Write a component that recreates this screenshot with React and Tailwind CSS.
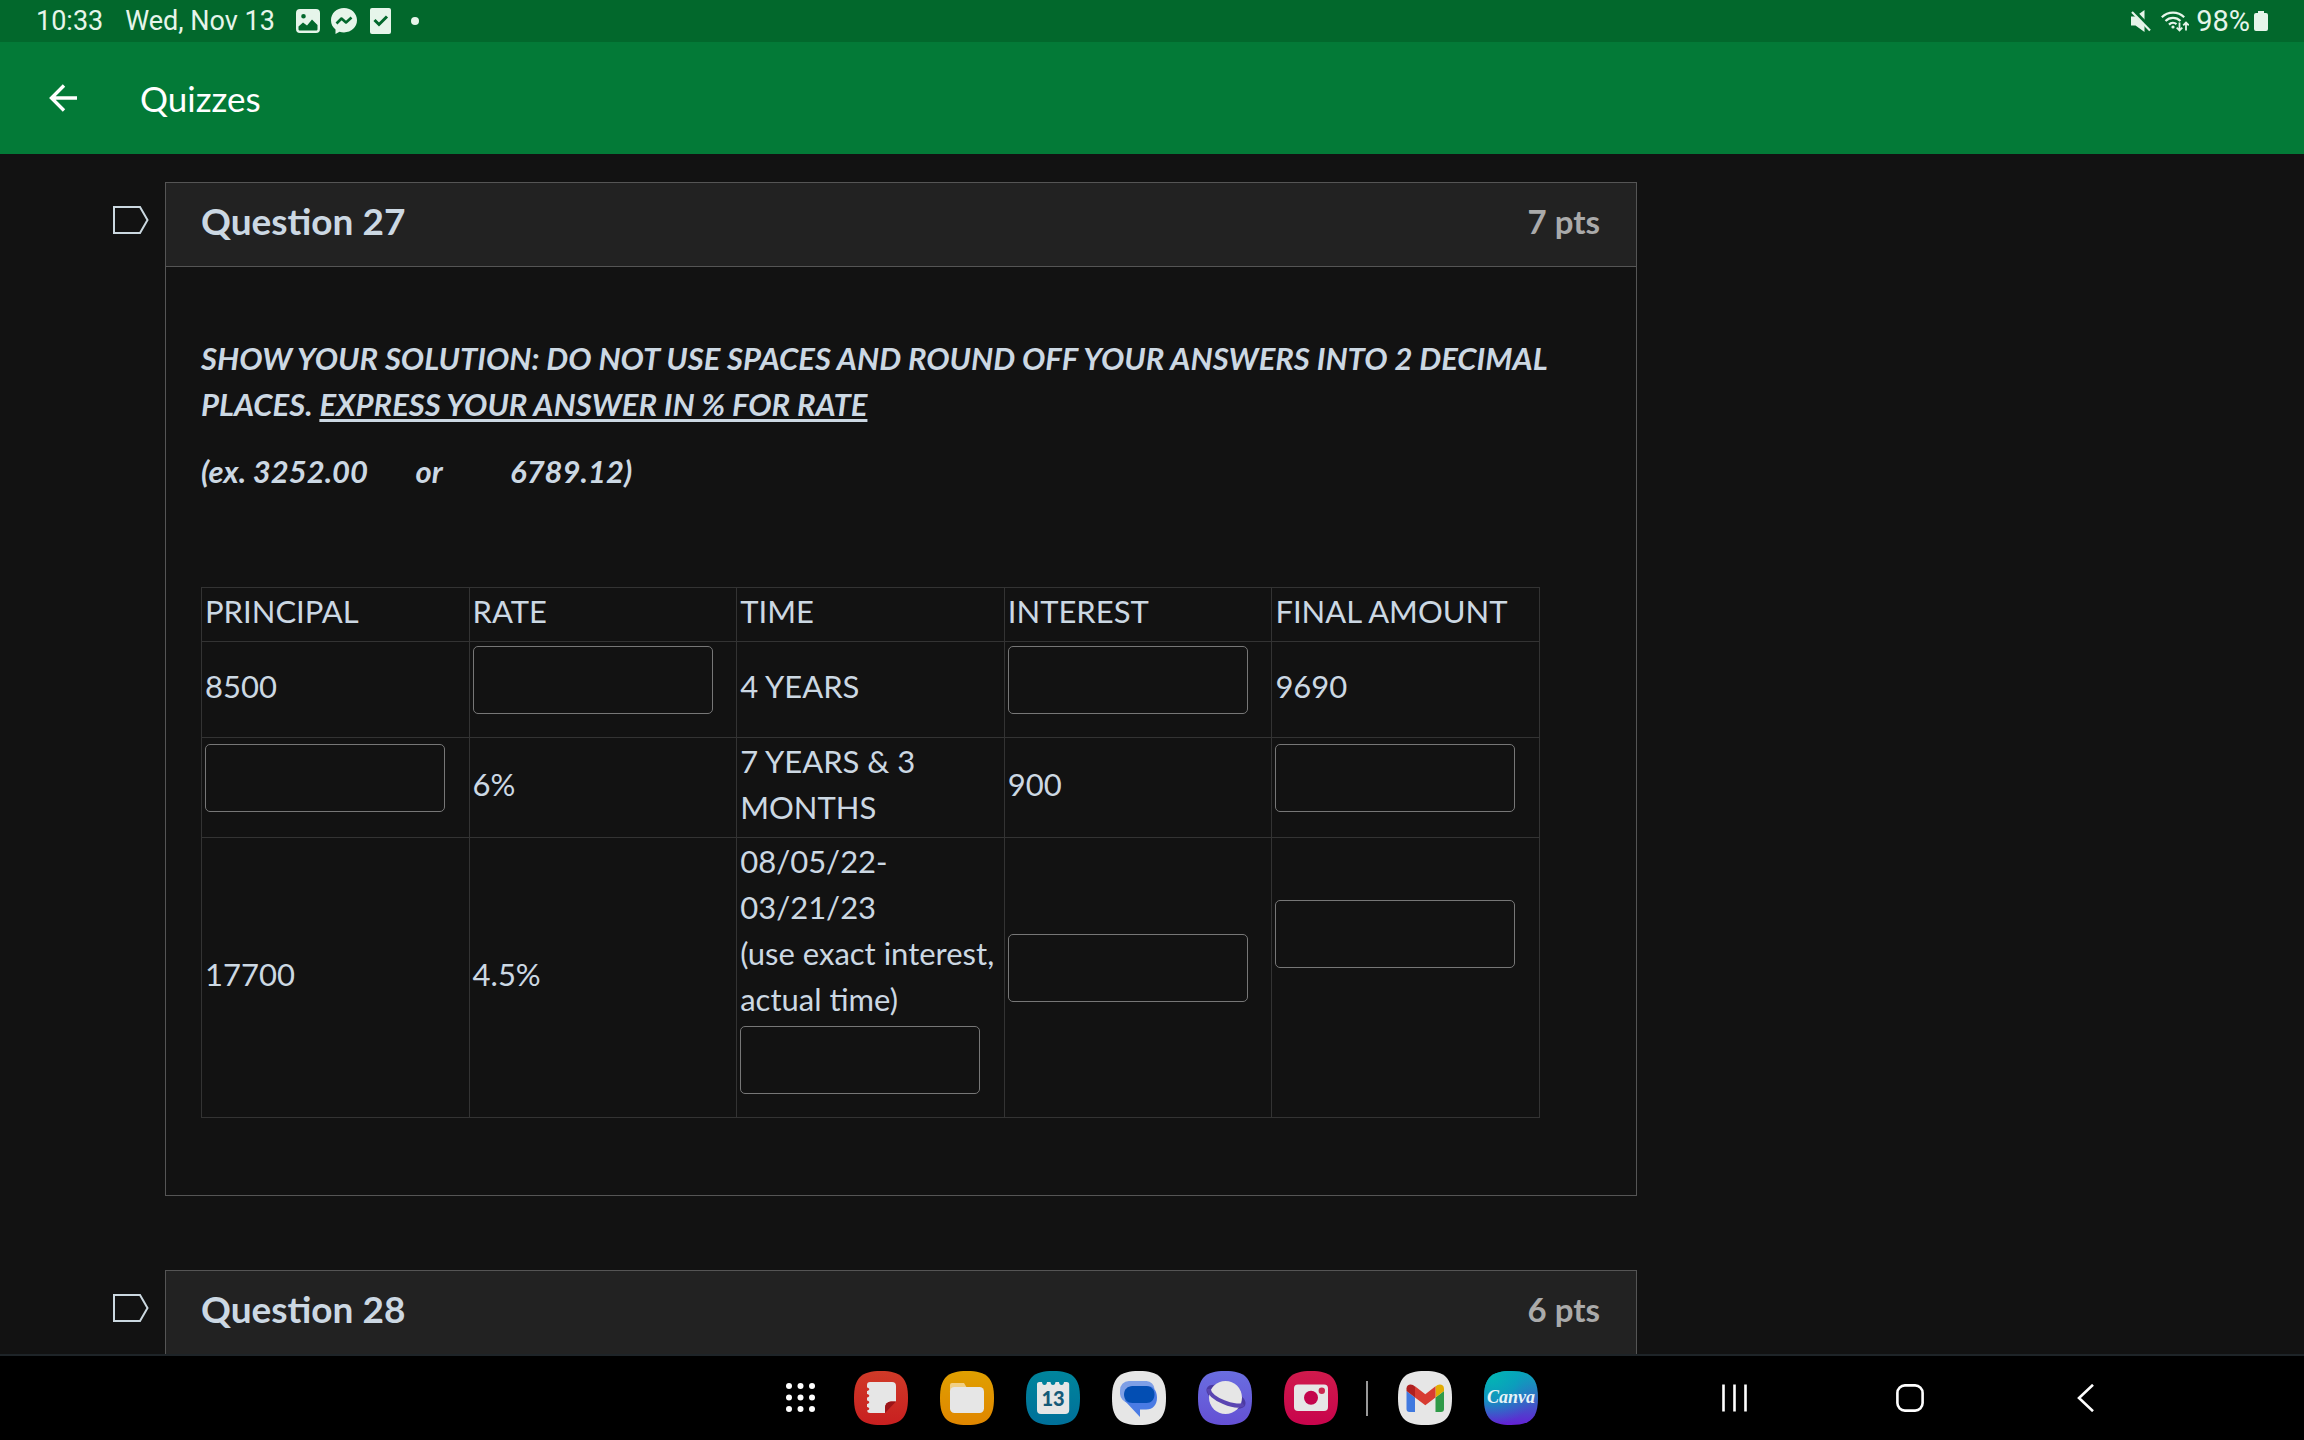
import { useState } from 'react';

const SQUIRCLE = 'M27 0C47 0 54 7 54 27S47 54 27 54 0 47 0 27 7 0 27 0Z';

const QUESTION_ROWS = [
  [{ text: '8500' }, { input: 'rate1' }, { text: '4 YEARS' }, { input: 'interest1' }, { text: '9690' }],
  [{ input: 'principal2' }, { text: '6%' }, { text: '7 YEARS & 3 MONTHS' }, { text: '900' }, { input: 'final2' }],
  [
    { text: '17700' },
    { text: '4.5%' },
    { lines: ['08/05/22-', '03/21/23', '(use exact interest,', 'actual time)'], input: 'time3' },
    { input: 'interest3' },
    { input: 'final3', trailing: true },
  ],
];

const COLUMNS = ['PRINCIPAL', 'RATE', 'TIME', 'INTEREST', 'FINAL AMOUNT'];

function StatusBar() {
  return (
    <div className="flex h-[42px] shrink-0 items-center justify-between bg-[#02682c] pl-9 pr-9 font-['Roboto',sans-serif] text-[27px] leading-[42px] text-[#e6f5ea]">
      <div className="flex items-center">
        <span>10:33</span>
        <span className="ml-[22px]">Wed, Nov 13</span>
        <svg className="ml-[21px]" width="24" height="24" viewBox="0 0 24 24">
          <path fillRule="evenodd" fill="currentColor" d="M4 0h16a4 4 0 0 1 4 4v16a4 4 0 0 1-4 4H4a4 4 0 0 1-4-4V4a4 4 0 0 1 4-4ZM2.500 17.500V20c0 1 .5 1.500 1.500 1.500h16c1 0 1.500-.5 1.500-1.500v-4L16 10.500l-5 6-4-3ZM7.500 5a2.300 2.300 0 1 0 0 4.600 2.300 2.300 0 0 0 0-4.600Z" />
        </svg>
        <svg className="ml-[11px]" width="26" height="26" viewBox="0 0 26 26">
          <path fill="currentColor" d="M13 0C5.600 0 0 5.400 0 12.300c0 3.800 1.600 7 4.500 9.200V26l4-2.200c1.400.4 2.900.6 4.500.6 7.400 0 13-5.300 13-12.100S20.400 0 13 0Z" />
          <path fill="none" stroke="#02682c" strokeWidth="2.600" strokeLinejoin="round" d="m5.500 15.500 5-5 4.500 4 5.500-5" />
        </svg>
        <svg className="ml-[13px]" width="21" height="26" viewBox="0 0 21 26">
          <rect width="21" height="26" rx="2" fill="currentColor" />
          <path fill="none" stroke="#02682c" strokeWidth="3" d="m4.500 12 4.500 4.500 8-8" />
        </svg>
        <span className="ml-5 size-2 rounded-full bg-[#e6f5ea]" />
      </div>
      <div className="flex items-center">
        <svg width="21" height="22" viewBox="0 0 21 22">
          <path fill="currentColor" d="M0 6.500h4.500L13.500 0v22l-9-6.500H0Z" />
          <path stroke="#02682c" strokeWidth="4.500" d="m2.500 1 18 19" />
          <path stroke="currentColor" strokeWidth="2.200" d="m1 2 18 18.500" />
        </svg>
        <svg className="ml-[9px]" width="28" height="22" viewBox="0 0 28 22" fill="none" stroke="currentColor" strokeWidth="2.200">
          <path d="M.8 7.200a16 16 0 0 1 22.400 0M4.500 11a10.800 10.800 0 0 1 15 0M8 14.600a5.600 5.600 0 0 1 7.500-.4" />
          <circle cx="12" cy="17" r="1.600" fill="currentColor" stroke="none" />
          <path strokeWidth="1.800" d="M18.500 12.500v8m-2.800-2.800 2.800 2.800 2.800-2.800M25 20.500v-8m-2.800 2.800 2.800-2.800 2.800 2.800" />
        </svg>
        <span className="ml-[7px] text-[29px]">98%</span>
        <svg className="ml-1" width="14" height="20" viewBox="0 0 14 20">
          <path fill="currentColor" d="M4 0h6v2h2a2 2 0 0 1 2 2v14a2 2 0 0 1-2 2H2a2 2 0 0 1-2-2V4a2 2 0 0 1 2-2h2Z" />
        </svg>
      </div>
    </div>
  );
}

function AppBar() {
  return (
    <header className="flex h-28 shrink-0 items-center bg-[#037a37] pl-12 text-white">
      <button type="button" aria-label="Back" className="cursor-pointer">
        <svg width="30" height="28" viewBox="0 0 30 28" fill="none" stroke="currentColor" strokeWidth="3.400">
          <path d="M29 14H3.500M16 1.500 3.500 14 16 26.500" />
        </svg>
      </button>
      <h1 className="ml-[62px] text-[35px] leading-[46px]">Quizzes</h1>
    </header>
  );
}

function Question({ title, points, children }) {
  return (
    <section className="flex max-w-[1524px] items-start">
      <button type="button" aria-label={`Flag ${title}`} className="mt-6 w-[52px] shrink-0 cursor-pointer">
        <svg width="36" height="28" viewBox="0 0 36 28" fill="none" stroke="#cbd8e0" strokeWidth="2">
          <path d="M1 1h26l7.500 13L27 27H1Z" />
        </svg>
      </button>
      <div className="min-w-0 flex-1 border border-[#555]">
        <div className="flex justify-between border-b border-[#555] bg-[#222] pt-[15px] pr-9 pb-[22px] pl-[35px] font-bold">
          <h2 className="text-[37px] leading-[46px] text-[#ccd8e3]">{title}</h2>
          <span className="text-[33px] text-[#aaa]">{points}</span>
        </div>
        {children}
      </div>
    </section>
  );
}

function Cell({ cell, answers, onChange }) {
  return (
    <td className="border border-[#333] px-[3px] pb-[7px] align-middle">
      {cell.text}
      {cell.lines && cell.lines.map(line => <div key={line} className="whitespace-nowrap">{line}</div>)}
      {cell.input && (
        <input type="text" aria-label={cell.input} value={answers[cell.input] || ''}
          onChange={e => onChange(cell.input, e.target.value)}
          className={`mt-1 block h-[68px] w-60 max-w-full rounded-[5px] border border-[#777] bg-transparent px-4 outline-none focus:border-[#ccd8e3] ${cell.trailing ? 'mb-[84px]' : 'mb-4'}`} />
      )}
    </td>
  );
}

function AnswerTable() {
  const [answers, setAnswers] = useState({});
  const handleChange = (name, value) => setAnswers(prev => ({ ...prev, [name]: value }));

  return (
    <table className="w-full table-fixed border-collapse text-left">
      <thead>
        <tr>
          {COLUMNS.map(col => (
            <th key={col} scope="col" className="border border-[#333] px-[3px] pb-[7px] font-normal">{col}</th>
          ))}
        </tr>
      </thead>
      <tbody>
        {QUESTION_ROWS.map((row, i) => (
          <tr key={i}>
            {row.map((cell, j) => <Cell key={j} cell={cell} answers={answers} onChange={handleChange} />)}
          </tr>
        ))}
      </tbody>
    </table>
  );
}

function AppIcon({ label, from, to, children }) {
  const id = `bg-${label.toLowerCase()}`;
  return (
    <button type="button" aria-label={label} className="cursor-pointer">
      <svg width="54" height="54" viewBox="0 0 54 54">
        <defs>
          <linearGradient id={id} x1="0" y1="0" x2="0" y2="1">
            <stop offset="0" stopColor={from} />
            <stop offset="1" stopColor={to} />
          </linearGradient>
        </defs>
        <path d={SQUIRCLE} fill={`url(#${id})`} />
        {children}
      </svg>
    </button>
  );
}

function Taskbar() {
  return (
    <nav className="grid h-[86px] shrink-0 grid-cols-[786fr_752px_766fr] items-center border-t-2 border-[#1e2428] bg-black text-white">
      <div className="col-start-2 flex items-center">
        <button type="button" aria-label="All apps" className="mr-[38px] cursor-pointer">
          <svg width="30" height="30" viewBox="0 0 30 30" fill="currentColor">
            {[3, 14.5, 26].map(y => [3, 14.5, 26].map(x => <circle key={`${x}-${y}`} cx={x} cy={y} r="3" />))}
          </svg>
        </button>
        <div className="flex gap-8">
          <AppIcon label="Notes" from="#d03a28" to="#c81f20">
            <path fill="#e6e6e6" d="M16 11h22a4 4 0 0 1 4 4v15.500H37a6 6 0 0 0-6 6V42H16a3 3 0 0 1-3-2.500c3-.3 3-3.200 0-3.500v-3c3-.3 3-3.200 0-3.500v-3c3-.3 3-3.200 0-3.500v-3c3-.3 3-3.200 0-3.500V14a3 3 0 0 1 3-3Z" />
            <path fill="#9c1418" d="M31 42v-5.500a6 6 0 0 1 6-6h5Z" />
          </AppIcon>
          <AppIcon label="Files" from="#e0a000" to="#e08600">
            <path fill="#f0cf85" d="M10 22v-8a2 2 0 0 1 2-2h12l3 5v5Z" />
            <rect x="10" y="16" width="34" height="26" rx="4.500" fill="#e6e6e6" />
          </AppIcon>
          <AppIcon label="Calendar" from="#00859c" to="#00709a">
            <path fill="#e6e6e6" d="M13.500 11H16c.3 2 .8 3 2.500 3s2.200-1 2.500-3h3.500c.3 2 .8 3 2.500 3s2.200-1 2.500-3H33c.3 2 .8 3 2.500 3s2.200-1 2.500-3h2.500a2.700 2.700 0 0 1 2.700 3v25a4 4 0 0 1-4 4H15a4 4 0 0 1-4-4V14a2.700 2.700 0 0 1 2.500-3Z" />
            <text x="27" y="35" textAnchor="middle" fill="#155a78" className="font-['Lato',sans-serif] text-[20px] font-black">13</text>
          </AppIcon>
          <AppIcon label="Messages" from="#e6e6e6" to="#e6e6e6">
            <path fill="#7e9fe6" d="M17 10h17.500a8.500 8.500 0 0 1 8 8L28 32H16A10 10 0 0 1 8 23v-3.500A9 9 0 0 1 17 10Z" />
            <path fill="#4a7be4" d="M20 15h16c5 0 9 4.500 9 11.500C45 34 41 38.500 34 38.500h-6V46L13 30Z" />
            <path fill="#034eb3" d="M20.500 15h14c4.500 0 8 3.500 8 8.500s-3.500 8.500-8 8.500h-14c-5 0-8.500-3.500-8.500-8.500S15.500 15 20.500 15Z" />
          </AppIcon>
          <AppIcon label="Internet" from="#6a6ee0" to="#6450d4">
            <ellipse cx="28" cy="25.700" rx="19" ry="7" transform="rotate(24 28 25.700)" fill="none" stroke="#4b3aa2" strokeWidth="4" />
            <circle cx="27.500" cy="26.500" r="16.500" fill="#e6e6e6" />
            <path fill="none" stroke="#5a45b2" strokeWidth="4" d="M10.600 18C12 28 38 38 45.400 33.400" />
          </AppIcon>
          <AppIcon label="Camera" from="#d01a4c" to="#c8044c">
            <rect x="10" y="13.500" width="34" height="26.500" rx="4" fill="#e6e6e6" />
            <circle cx="27" cy="26.700" r="7" fill="#c4044c" />
            <circle cx="37.800" cy="19.700" r="3.200" fill="#cc2850" />
          </AppIcon>
        </div>
        <span className="mr-[30px] ml-7 h-[35px] w-[2px] bg-[#999]" />
        <div className="flex gap-8">
          <AppIcon label="Gmail" from="#e6e6e6" to="#e6e6e6">
            <path fill="#4079df" d="M8.500 20 17 26.500V41h-5.500a3 3 0 0 1-3-3Z" />
            <path fill="#2f9a48" d="M46 20l-8.500 6.500V41H43a3 3 0 0 0 3-3Z" />
            <path fill="#e2ac04" d="M37.500 15.500c3-3.500 8.500-2.500 8.500 2V20l-8.500 6.500Z" />
            <path fill="#b02020" d="M17 15.500c-3-3.500-8.500-2.500-8.500 2V20l8.500 6.500Z" />
            <path fill="#d83c32" d="m17 15.300 10.300 7.900 10.200-7.900v11.200l-10.200 7.800L17 26.500Z" />
          </AppIcon>
          <AppIcon label="Canva" from="#04b4b4" to="#6420d4">
            <defs>
              <radialGradient id="canva-mid" cx="0.150" cy="0.100" r="0.900">
                <stop offset="0" stopColor="#04b4b4" />
                <stop offset="0.500" stopColor="#04a4bc" stopOpacity="0.700" />
                <stop offset="1" stopColor="#2478cc" stopOpacity="0" />
              </radialGradient>
            </defs>
            <path d={SQUIRCLE} fill="url(#canva-mid)" />
            <text x="27" y="32" textAnchor="middle" fill="#e8f4f8" className="font-['Liberation_Serif',serif] text-[18px] font-bold italic">Canva</text>
          </AppIcon>
        </div>
      </div>
      <div className="flex items-center justify-between pr-[204px] pl-[182px]">
        <button type="button" aria-label="Recents" className="flex w-[30px] cursor-pointer justify-center">
          <svg width="26" height="28" viewBox="0 0 26 28" stroke="currentColor" strokeWidth="2.600">
            <path d="M1.500 .5v27M12.500 .5v27M23.500 .5v27" />
          </svg>
        </button>
        <button type="button" aria-label="Home" className="flex w-[30px] cursor-pointer justify-center">
          <svg width="28" height="28" viewBox="0 0 28 28" fill="none" stroke="currentColor" strokeWidth="2.600">
            <rect x="1.400" y="1.400" width="25.200" height="25.200" rx="7.500" />
          </svg>
        </button>
        <button type="button" aria-label="Go back" className="flex w-[30px] cursor-pointer justify-center">
          <svg width="17" height="28" viewBox="0 0 17 28" fill="none" stroke="currentColor" strokeWidth="2.600">
            <path d="M16 .8 2 14l14 13.200" />
          </svg>
        </button>
      </div>
    </nav>
  );
}

export default function App() {
  return (
    <div className="flex h-screen flex-col overflow-hidden bg-[#121212] font-['Lato',sans-serif] text-[31px] leading-[46px] text-[#ccd8e3]">
      <StatusBar />
      <AppBar />
      <main className="min-h-0 flex-1 space-y-[74px] overflow-hidden pt-7 pl-[113px]">
        <Question title="Question 27" points="7 pts">
          <div className="pt-[68px] pr-9 pb-[77px] pl-[35px]">
            <div className="font-bold italic">
              <p>
                <span>SHOW YOUR SOLUTION: DO NOT USE SPACES AND ROUND OFF YOUR ANSWERS INTO 2 DECIMAL</span>{' '}
                <span>PLACES.</span>{' '}
                <u className="decoration-[3px] underline-offset-[3px]">EXPRESS YOUR ANSWER IN % FOR RATE</u>
              </p>
              <p className="mt-[21px] mb-[93px] whitespace-pre">{'(ex. 3252.00       or          6789.12)'}</p>
            </div>
            <div className="pr-15">
              <AnswerTable />
            </div>
          </div>
        </Question>
        <Question title="Question 28" points="6 pts" />
      </main>
      <Taskbar />
    </div>
  );
}
